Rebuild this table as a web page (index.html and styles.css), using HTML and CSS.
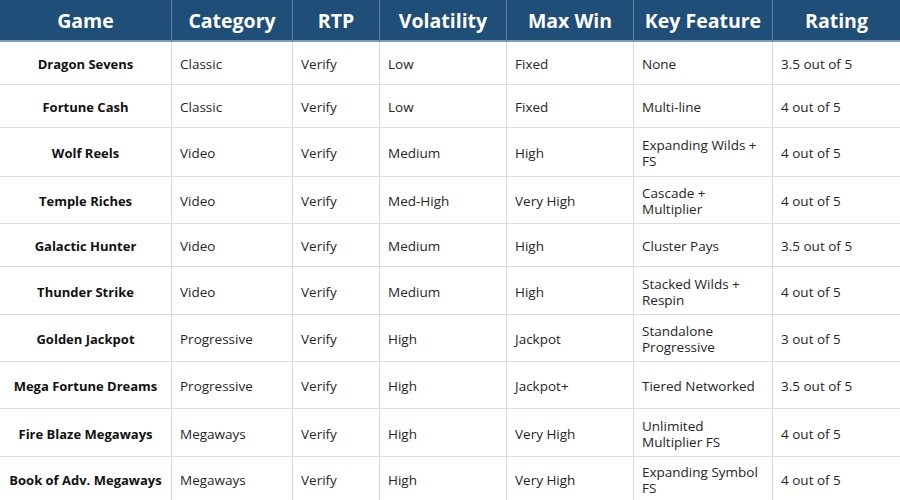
FILE: index.html
```html
<!DOCTYPE html>
<html>
<head>
<meta charset="utf-8">
<link rel="stylesheet" href="styles.css">
</head>
<body>
<div class="table">
  <div class="cell head">Game</div>
  <div class="cell head">Category</div>
  <div class="cell head">RTP</div>
  <div class="cell head">Volatility</div>
  <div class="cell head">Max Win</div>
  <div class="cell head">Key Feature</div>
  <div class="cell head last">Rating</div>

  <div class="cell game">Dragon Sevens</div>
  <div class="cell">Classic</div>
  <div class="cell">Verify</div>
  <div class="cell">Low</div>
  <div class="cell">Fixed</div>
  <div class="cell">None</div>
  <div class="cell last">3.5 out of 5</div>

  <div class="cell game">Fortune Cash</div>
  <div class="cell">Classic</div>
  <div class="cell">Verify</div>
  <div class="cell">Low</div>
  <div class="cell">Fixed</div>
  <div class="cell">Multi-line</div>
  <div class="cell last">4 out of 5</div>

  <div class="cell game">Wolf Reels</div>
  <div class="cell">Video</div>
  <div class="cell">Verify</div>
  <div class="cell">Medium</div>
  <div class="cell">High</div>
  <div class="cell">Expanding Wilds + FS</div>
  <div class="cell last">4 out of 5</div>

  <div class="cell game">Temple Riches</div>
  <div class="cell">Video</div>
  <div class="cell">Verify</div>
  <div class="cell">Med-High</div>
  <div class="cell">Very High</div>
  <div class="cell">Cascade + Multiplier</div>
  <div class="cell last">4 out of 5</div>

  <div class="cell game">Galactic Hunter</div>
  <div class="cell">Video</div>
  <div class="cell">Verify</div>
  <div class="cell">Medium</div>
  <div class="cell">High</div>
  <div class="cell">Cluster Pays</div>
  <div class="cell last">3.5 out of 5</div>

  <div class="cell game">Thunder Strike</div>
  <div class="cell">Video</div>
  <div class="cell">Verify</div>
  <div class="cell">Medium</div>
  <div class="cell">High</div>
  <div class="cell">Stacked Wilds + Respin</div>
  <div class="cell last">4 out of 5</div>

  <div class="cell game">Golden Jackpot</div>
  <div class="cell">Progressive</div>
  <div class="cell">Verify</div>
  <div class="cell">High</div>
  <div class="cell">Jackpot</div>
  <div class="cell">Standalone Progressive</div>
  <div class="cell last">3 out of 5</div>

  <div class="cell game">Mega Fortune Dreams</div>
  <div class="cell">Progressive</div>
  <div class="cell">Verify</div>
  <div class="cell">High</div>
  <div class="cell">Jackpot+</div>
  <div class="cell">Tiered Networked</div>
  <div class="cell last">3.5 out of 5</div>

  <div class="cell game">Fire Blaze Megaways</div>
  <div class="cell">Megaways</div>
  <div class="cell">Verify</div>
  <div class="cell">High</div>
  <div class="cell">Very High</div>
  <div class="cell">Unlimited Multiplier FS</div>
  <div class="cell last">4 out of 5</div>

  <div class="cell game">Book of Adv. Megaways</div>
  <div class="cell">Megaways</div>
  <div class="cell">Verify</div>
  <div class="cell">High</div>
  <div class="cell">Very High</div>
  <div class="cell">Expanding Symbol FS</div>
  <div class="cell last">4 out of 5</div>
</div>
</body>
</html>
```
FILE: styles.css
```css
html, body {
  margin: 0;
  padding: 0;
  background: #ffffff;
}
body {
  font-family: "Open Sans", "Noto Sans", sans-serif;
  color: #1a1a1a;
  width: 900px;
  height: 500px;
  overflow: hidden;
}
.table {
  display: grid;
  grid-template-columns: 172px 121px 87px 127px 127px 139px 127px;
  grid-template-rows: 42px 43px 43px 49px 47px 43px 48px 47px 47px 48px 45px;
}
.cell {
  display: flex;
  align-items: center;
  padding: 2px 8px 0 8px;
  font-size: 13.5px;
  line-height: 16px;
  border-right: 1px solid #d9d9d9;
  border-bottom: 1.5px solid #dcdcdc;
  box-sizing: border-box;
  color: #262626;
}
.cell.last {
  border-right: none;
}
.head {
  background: #1f4e79;
  color: #ffffff;
  font-weight: 700;
  font-size: 19.5px;
  justify-content: center;
  padding: 2px 0 0 0;
  border-right: 1px solid #5f82a6;
  border-bottom: 2px solid #7f9cba;
}
.head.last {
  border-right: none;
}
.game {
  font-weight: 700;
  font-size: 13px;
  justify-content: center;
  text-align: center;
  padding: 2px 4px 0 4px;
  color: #111;
}
```
